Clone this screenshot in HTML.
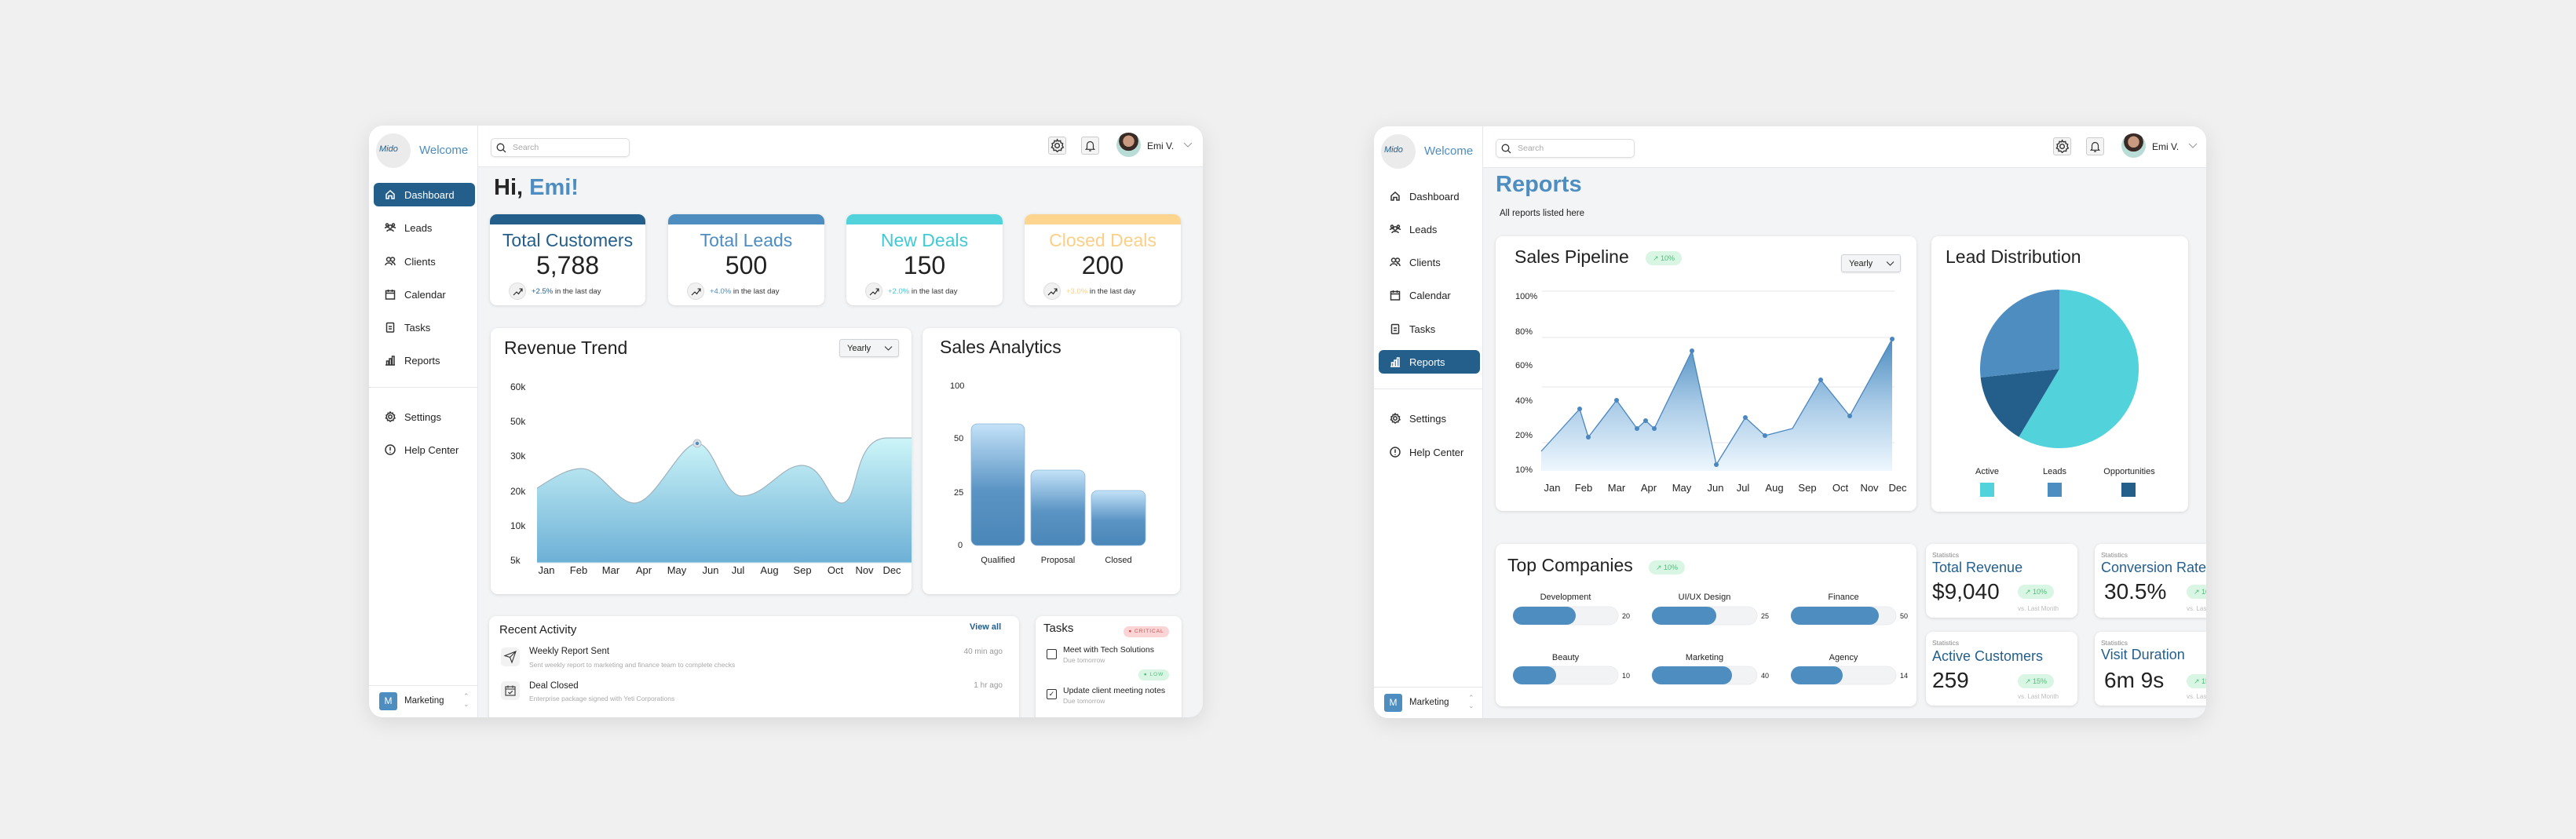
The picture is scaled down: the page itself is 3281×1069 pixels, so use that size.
<!DOCTYPE html>
<html><head><meta charset="utf-8">
<style>
*{box-sizing:border-box;margin:0;padding:0}
body{width:3281px;height:1069px;background:#f0f0f1;font-family:"Liberation Sans",sans-serif;color:#1f1f1f;position:relative;overflow:hidden}
.a{position:absolute}
.panel{position:absolute;background:#f3f4f6;border-radius:18px;overflow:hidden;box-shadow:0 6px 28px rgba(0,0,0,.10)}
.side{position:absolute;left:0;top:0;width:139px;height:100%;background:#fff;border-right:1px solid #e6e7ea}
.top{position:absolute;left:139px;top:0;right:0;height:53px;background:#fff;border-bottom:1px solid #e6e7ea}
.nav{position:absolute;left:6px;width:129px;height:30px;font-size:13px;display:flex;align-items:center;padding-left:14px;color:#222}
.nav svg{width:14px;height:14px;margin-right:11px;fill:none;stroke:#333;stroke-width:1.5}
.nav.act{background:#245f8c;color:#fff;border-radius:6px}
.nav.act svg{stroke:#fff}
.card{position:absolute;background:#fff;border-radius:9px;box-shadow:0 1px 4px rgba(0,0,0,.12)}
.stat .band{position:absolute;left:0;top:0;right:0;height:13px;border-radius:9px 9px 0 0}
.stat .t{position:absolute;left:0;right:0;top:20px;text-align:center;font-size:23px}
.stat .n{position:absolute;left:0;right:0;top:47px;text-align:center;font-size:32px;color:#222}
.stat .tr{position:absolute;left:24px;top:87px;font-size:9.5px;color:#333;display:flex;align-items:center}
.stat .tr i{display:inline-block;width:22px;height:22px;border-radius:50%;background:#f1f1f1;border:1px solid #ddd;margin-right:7px;position:relative}
.h{font-size:23px;color:#222}
.lbl{font-size:12px;color:#222}
.badge{position:absolute;background:#d9f5e3;color:#4cc27a;border-radius:10px;font-size:9px;display:flex;align-items:center;justify-content:center}
.dd{position:absolute;border:1px solid #cfd2d6;background:#f3f4f5;border-radius:3px;font-size:11px;display:flex;align-items:center;padding-left:9px;box-shadow:0 1px 2px rgba(0,0,0,.1)}
.sq{position:absolute;width:23px;height:23px;border:1px solid #ccc;border-radius:3px;background:#f4f4f4}
</style></head><body>

<!-- ================= LEFT PANEL ================= -->
<div class="panel" style="left:470px;top:160px;width:1062px;height:754px">
 <div class="side">
  <div class="a" style="left:9px;top:10px;width:44px;height:44px;border-radius:50%;background:#ebebeb"></div>
  <div class="a" style="left:13px;top:24px;font-size:11px;color:#245f8c;font-style:italic">Mido</div>
  <div class="a" style="left:64px;top:23px;font-size:15px;color:#4d8dc0">Welcome</div>
  <div class="nav act" style="top:73px"><svg viewBox="0 0 14 14"><path d="M2 6.5L7 2l5 4.5V12H9V8.5H5V12H2z"/></svg>Dashboard</div>
  <div class="nav" style="top:115px"><svg viewBox="0 0 14 14"><circle cx="7" cy="6" r="2.2"/><circle cx="3" cy="3.5" r="1.5"/><circle cx="11" cy="3.5" r="1.5"/><path d="M3 12c0-3 8-3 8 0M0.5 8c0-2 4-2 4-1M13.5 8c0-2-4-2-4-1"/></svg>Leads</div>
  <div class="nav" style="top:158px"><svg viewBox="0 0 14 14"><circle cx="5" cy="4.5" r="2.5"/><circle cx="10" cy="4.5" r="2.5"/><path d="M1 12c0-4 8-4 8 0M9 8.5c3 0 4 1.5 4 3.5"/></svg>Clients</div>
  <div class="nav" style="top:200px"><svg viewBox="0 0 14 14"><rect x="1.5" y="2.5" width="11" height="10.5"/><path d="M1.5 5.5h11M4.5 1v3M9.5 1v3"/></svg>Calendar</div>
  <div class="nav" style="top:242px"><svg viewBox="0 0 14 14"><rect x="2.5" y="1.5" width="9" height="11.5" rx="1"/><path d="M5 6h4M5 9h4"/></svg>Tasks</div>
  <div class="nav" style="top:284px"><svg viewBox="0 0 14 14"><path d="M1 13h12M2.5 13V8h2.5v5M6 13V5h2.5v8M9.5 13V2H12v11"/></svg>Reports</div>
  <div class="a" style="left:0;top:333px;width:139px;height:1px;background:#e6e7ea"></div>
  <div class="nav" style="top:356px"><svg viewBox="0 0 14 14"><circle cx="7" cy="7" r="2.2"/><path d="M7 1l1.2 1.6 2-.4.4 2L12.5 5 12 7l1 1.8-1.9.9-.2 2-2-.2L7 13l-1.4-1.5-2 .2-.2-2L1.5 8.8 2.5 7 2 5l1.9-.8.4-2 2 .4z"/></svg>Settings</div>
  <div class="nav" style="top:398px"><svg viewBox="0 0 14 14"><circle cx="7" cy="7" r="6"/><path d="M7 3.5v4.5M7 9.7v1"/></svg>Help Center</div>
  <div class="a" style="left:0;top:713px;width:139px;height:1px;background:#e6e7ea"></div>
  <div class="a" style="left:13px;top:722px;width:23px;height:23px;background:#4d8dc0;border-radius:3px;color:#fff;font-size:12px;text-align:center;line-height:23px">M</div>
  <div class="a" style="left:45px;top:727px;font-size:11.5px">Marketing</div>
  <div class="a" style="left:120px;top:722px;font-size:9px;color:#aaa;line-height:10px">⌃<br>⌄</div>
 </div>
 <div class="top">
  <div class="a" style="left:16px;top:16px;width:177px;height:24px;border:1px solid #ddd;border-radius:5px;box-shadow:0 1px 2px rgba(0,0,0,.08)">
   <svg class="a" style="left:6px;top:5px" width="13" height="13" viewBox="0 0 13 13"><circle cx="5.5" cy="5.5" r="4.3" fill="none" stroke="#333" stroke-width="1.3"/><path d="M8.7 8.7l3.3 3.3" stroke="#333" stroke-width="1.3"/></svg>
   <div class="a" style="left:27px;top:5px;font-size:10.5px;color:#aaa">Search</div>
  </div>
  <div class="sq" style="left:726px;top:14px"><svg width="21" height="21" viewBox="0 0 14 14" style="margin:0"><g transform="translate(1,1) scale(.86)" fill="none" stroke="#333" stroke-width="1.1"><circle cx="7" cy="7" r="2.2"/><path d="M7 1l1.2 1.6 2-.4.4 2L12.5 5 12 7l1 1.8-1.9.9-.2 2-2-.2L7 13l-1.4-1.5-2 .2-.2-2L1.5 8.8 2.5 7 2 5l1.9-.8.4-2 2 .4z"/></g></svg></div>
  <div class="sq" style="left:768px;top:14px"><svg width="21" height="21" viewBox="0 0 21 21"><path d="M6.5 14V9.5a4 4 0 018 0V14l1.2 1.3H5.3zM9 17h3" fill="none" stroke="#333" stroke-width="1.2"/></svg></div>
  <div class="a" style="left:813px;top:9px;width:31px;height:31px;border-radius:50%;background:radial-gradient(circle at 50% 35%,#c99a80 0 28%,#3a2a25 29% 48%,#b9ddd6 49%)"></div>
  <div class="a" style="left:852px;top:19px;font-size:12px">Emi V.</div>
  <svg class="a" style="left:898px;top:21px" width="12" height="8" viewBox="0 0 12 8"><path d="M1 1l5 5 5-5" fill="none" stroke="#999" stroke-width="1.1"/></svg>
 </div>
 <div class="a" style="left:159px;top:63px;font-size:29px;font-weight:bold;color:#262626">Hi, <span style="color:#4d8dc0">Emi!</span></div>

 <div class="card stat" style="left:154px;top:113px;width:198px;height:116px"><div class="band" style="background:#245f8c"></div><div class="t" style="color:#245f8c">Total Customers</div><div class="n">5,788</div><div class="tr"><i><svg class="a" style="left:4px;top:5px" width="13" height="11" viewBox="0 0 13 11"><path d="M1 10l4-4 2.5 2.5L12 2M8.5 2H12v3.5" fill="none" stroke="#222" stroke-width="1.1"/></svg></i><b style="color:#245f8c;font-weight:normal">+2.5%</b>&nbsp;in the last day</div></div>
 <div class="card stat" style="left:381px;top:113px;width:199px;height:116px"><div class="band" style="background:#4d8dc0"></div><div class="t" style="color:#4d8dc0">Total Leads</div><div class="n">500</div><div class="tr"><i><svg class="a" style="left:4px;top:5px" width="13" height="11" viewBox="0 0 13 11"><path d="M1 10l4-4 2.5 2.5L12 2M8.5 2H12v3.5" fill="none" stroke="#222" stroke-width="1.1"/></svg></i><b style="color:#4d8dc0;font-weight:normal">+4.0%</b>&nbsp;in the last day</div></div>
 <div class="card stat" style="left:608px;top:113px;width:199px;height:116px"><div class="band" style="background:#52d2db"></div><div class="t" style="color:#3fcad4">New Deals</div><div class="n">150</div><div class="tr"><i><svg class="a" style="left:4px;top:5px" width="13" height="11" viewBox="0 0 13 11"><path d="M1 10l4-4 2.5 2.5L12 2M8.5 2H12v3.5" fill="none" stroke="#222" stroke-width="1.1"/></svg></i><b style="color:#3fcad4;font-weight:normal">+2.0%</b>&nbsp;in the last day</div></div>
 <div class="card stat" style="left:835px;top:113px;width:199px;height:116px"><div class="band" style="background:#fdd58f"></div><div class="t" style="color:#fbcf86">Closed Deals</div><div class="n">200</div><div class="tr"><i><svg class="a" style="left:4px;top:5px" width="13" height="11" viewBox="0 0 13 11"><path d="M1 10l4-4 2.5 2.5L12 2M8.5 2H12v3.5" fill="none" stroke="#222" stroke-width="1.1"/></svg></i><b style="color:#fbcf86;font-weight:normal">+3.0%</b>&nbsp;in the last day</div></div>

 <div class="card" style="left:155px;top:258px;width:536px;height:339px"></div>
 <div class="a h" style="left:172px;top:270px">Revenue Trend</div>
 <div class="dd" style="left:599px;top:272px;width:76px;height:23px">Yearly<svg class="a" style="left:56px;top:7px" width="11" height="8" viewBox="0 0 11 8"><path d="M1 1.5l4.5 4.5 4.5-4.5" fill="none" stroke="#333" stroke-width="1.1"/></svg></div>
 <div class="a lbl" style="left:180px;top:326px;line-height:14px">60k</div>
 <div class="a lbl" style="left:180px;top:370px">50k</div>
 <div class="a lbl" style="left:180px;top:414px">30k</div>
 <div class="a lbl" style="left:180px;top:459px">20k</div>
 <div class="a lbl" style="left:180px;top:503px">10k</div>
 <div class="a lbl" style="left:180px;top:547px">5k</div>

 <div class="card" style="left:705px;top:258px;width:328px;height:339px"></div>
 <div class="a h" style="left:727px;top:269px">Sales Analytics</div>
 <div class="a" style="left:740px;top:326px;font-size:11px">100</div>
 <div class="a" style="left:745px;top:393px;font-size:11px">50</div>
 <div class="a" style="left:745px;top:462px;font-size:11px">25</div>
 <div class="a" style="left:750px;top:529px;font-size:11px">0</div>
 <div class="a" style="left:767px;top:548px;width:68px;text-align:center;font-size:11px">Qualified</div>
 <div class="a" style="left:843px;top:548px;width:69px;text-align:center;font-size:11px">Proposal</div>
 <div class="a" style="left:920px;top:548px;width:69px;text-align:center;font-size:11px">Closed</div>

 <svg class="a" style="left:0;top:0" width="1062" height="754" viewBox="0 0 1062 754">
  <defs>
   <linearGradient id="rg" x1="0" y1="0" x2="0" y2="1"><stop offset="0" stop-color="#ccf5f8"/><stop offset="1" stop-color="#6db0d6"/></linearGradient>
   <linearGradient id="bg" x1="0" y1="0" x2="0" y2="1"><stop offset="0" stop-color="#c3e2f8"/><stop offset=".55" stop-color="#5a94c4"/><stop offset="1" stop-color="#4a86b8"/></linearGradient>
  </defs>
  <path d="M214,462 C240,445 255,437 271,437 C295,437 315,481 338,481 C365,481 395,405 418,405 C440,405 450,472 475,472 C505,472 525,433 551,433 C580,433 585,481 602,481 C625,481 615,398 660,398 L691,398 L691,557 L214,557 Z" fill="url(#rg)"/>
  <path d="M214,462 C240,445 255,437 271,437 C295,437 315,481 338,481 C365,481 395,405 418,405 C440,405 450,472 475,472 C505,472 525,433 551,433 C580,433 585,481 602,481 C625,481 615,398 660,398 L691,398" fill="none" stroke="#9fb3bf" stroke-width="1.2"/>
  <line x1="214" y1="557" x2="691" y2="557" stroke="#cfe3ea" stroke-width="1"/>
  <circle cx="418" cy="405" r="5" fill="#dde3e8" stroke="#b7c2ca"/><circle cx="418" cy="405" r="2.2" fill="#4d8dc0"/>
  <g font-family="Liberation Sans" font-size="13" fill="#222" text-anchor="middle">
   <text x="226" y="571">Jan</text><text x="267" y="571">Feb</text><text x="308" y="571">Mar</text><text x="350" y="571">Apr</text><text x="392" y="571">May</text><text x="435" y="571">Jun</text><text x="470" y="571">Jul</text><text x="510" y="571">Aug</text><text x="552" y="571">Sep</text><text x="594" y="571">Oct</text><text x="631" y="571">Nov</text><text x="666" y="571">Dec</text>
  </g>
  <rect x="767" y="380" width="68" height="155" rx="8" fill="url(#bg)" stroke="#8fb6d6" stroke-width=".8"/>
  <rect x="843" y="439" width="69" height="96" rx="8" fill="url(#bg)" stroke="#8fb6d6" stroke-width=".8"/>
  <rect x="920" y="465" width="69" height="70" rx="8" fill="url(#bg)" stroke="#8fb6d6" stroke-width=".8"/>
 </svg>

 <div class="card" style="left:153px;top:625px;width:675px;height:160px"></div>
 <div class="a" style="left:166px;top:634px;font-size:15px">Recent Activity</div>
 <div class="a" style="left:765px;top:633px;font-size:11px;color:#245f8c;font-weight:bold">View all</div>
 <div class="a" style="left:168px;top:665px;width:24px;height:24px;background:#f2f2f2;border-radius:5px"><svg width="24" height="24" viewBox="0 0 24 24"><path d="M5 10.5L19 5l-5 14-2.5-6.5zM11.5 12.5L19 5" fill="none" stroke="#333" stroke-width="1.1"/></svg></div>
 <div class="a" style="left:204px;top:664px;font-size:11.5px">Weekly Report Sent</div>
 <div class="a" style="left:204px;top:682px;font-size:8.5px;color:#aaa">Sent weekly report to marketing and finance team to complete checks</div>
 <div class="a" style="left:740px;top:665px;width:67px;text-align:right;font-size:10px;color:#999">40 min ago</div>
 <div class="a" style="left:168px;top:708px;width:24px;height:24px;background:#f2f2f2;border-radius:5px"><svg width="24" height="24" viewBox="0 0 24 24"><rect x="6" y="7" width="12" height="11" fill="none" stroke="#333" stroke-width="1.1"/><path d="M6 10h12M9 5.5v3M15 5.5v3M9.5 14l1.8 1.8 3.5-3.5" fill="none" stroke="#333" stroke-width="1.1"/></svg></div>
 <div class="a" style="left:204px;top:708px;font-size:11.5px">Deal Closed</div>
 <div class="a" style="left:204px;top:725px;font-size:8.5px;color:#aaa">Enterprise package signed with Yeti Corporations</div>
 <div class="a" style="left:740px;top:708px;width:67px;text-align:right;font-size:10px;color:#999">1 hr ago</div>

 <div class="card" style="left:849px;top:625px;width:186px;height:160px"></div>
 <div class="a" style="left:859px;top:632px;font-size:15px">Tasks</div>
 <div class="a" style="left:961px;top:638px;width:58px;height:14px;background:#fbd5d5;border-radius:7px;font-size:6.5px;color:#d34848;letter-spacing:1px;text-align:center;line-height:14px">● CRITICAL</div>
 <div class="a" style="left:863px;top:667px;width:13px;height:13px;border:1.3px solid #333;border-radius:2px"></div>
 <div class="a" style="left:884px;top:662px;font-size:10.5px">Meet with Tech Solutions</div>
 <div class="a" style="left:884px;top:676px;font-size:8.5px;color:#aaa">Due tomorrow</div>
 <div class="a" style="left:980px;top:693px;width:39px;height:14px;background:#d9f5e3;border-radius:7px;font-size:6.5px;color:#4cc27a;letter-spacing:1px;text-align:center;line-height:14px">● LOW</div>
 <div class="a" style="left:863px;top:718px;width:13px;height:13px;border:1.3px solid #333;border-radius:2px;font-size:9px;line-height:11px;text-align:center">✓</div>
 <div class="a" style="left:884px;top:714px;font-size:10.5px">Update client meeting notes</div>
 <div class="a" style="left:884px;top:728px;font-size:8.5px;color:#aaa">Due tomorrow</div>
</div>

<!-- ================= RIGHT PANEL ================= -->
<div class="panel" style="left:1750px;top:161px;width:1060px;height:754px">
 <div class="side">
  <div class="a" style="left:9px;top:10px;width:44px;height:44px;border-radius:50%;background:#ebebeb"></div>
  <div class="a" style="left:13px;top:24px;font-size:11px;color:#245f8c;font-style:italic">Mido</div>
  <div class="a" style="left:64px;top:23px;font-size:15px;color:#4d8dc0">Welcome</div>
  <div class="nav" style="top:74px"><svg viewBox="0 0 14 14"><path d="M2 6.5L7 2l5 4.5V12H9V8.5H5V12H2z"/></svg>Dashboard</div>
  <div class="nav" style="top:116px"><svg viewBox="0 0 14 14"><circle cx="7" cy="6" r="2.2"/><circle cx="3" cy="3.5" r="1.5"/><circle cx="11" cy="3.5" r="1.5"/><path d="M3 12c0-3 8-3 8 0M0.5 8c0-2 4-2 4-1M13.5 8c0-2-4-2-4-1"/></svg>Leads</div>
  <div class="nav" style="top:158px"><svg viewBox="0 0 14 14"><circle cx="5" cy="4.5" r="2.5"/><circle cx="10" cy="4.5" r="2.5"/><path d="M1 12c0-4 8-4 8 0M9 8.5c3 0 4 1.5 4 3.5"/></svg>Clients</div>
  <div class="nav" style="top:200px"><svg viewBox="0 0 14 14"><rect x="1.5" y="2.5" width="11" height="10.5"/><path d="M1.5 5.5h11M4.5 1v3M9.5 1v3"/></svg>Calendar</div>
  <div class="nav" style="top:243px"><svg viewBox="0 0 14 14"><rect x="2.5" y="1.5" width="9" height="11.5" rx="1"/><path d="M5 6h4M5 9h4"/></svg>Tasks</div>
  <div class="nav act" style="top:285px"><svg viewBox="0 0 14 14"><path d="M1 13h12M2.5 13V8h2.5v5M6 13V5h2.5v8M9.5 13V2H12v11"/></svg>Reports</div>
  <div class="a" style="left:0;top:334px;width:139px;height:1px;background:#e6e7ea"></div>
  <div class="nav" style="top:357px"><svg viewBox="0 0 14 14"><circle cx="7" cy="7" r="2.2"/><path d="M7 1l1.2 1.6 2-.4.4 2L12.5 5 12 7l1 1.8-1.9.9-.2 2-2-.2L7 13l-1.4-1.5-2 .2-.2-2L1.5 8.8 2.5 7 2 5l1.9-.8.4-2 2 .4z"/></svg>Settings</div>
  <div class="nav" style="top:400px"><svg viewBox="0 0 14 14"><circle cx="7" cy="7" r="6"/><path d="M7 3.5v4.5M7 9.7v1"/></svg>Help Center</div>
  <div class="a" style="left:0;top:714px;width:139px;height:1px;background:#e6e7ea"></div>
  <div class="a" style="left:13px;top:723px;width:23px;height:23px;background:#4d8dc0;border-radius:3px;color:#fff;font-size:12px;text-align:center;line-height:23px">M</div>
  <div class="a" style="left:45px;top:728px;font-size:11.5px">Marketing</div>
  <div class="a" style="left:120px;top:723px;font-size:9px;color:#aaa;line-height:10px">⌃<br>⌄</div>
 </div>
 <div class="top">
  <div class="a" style="left:16px;top:16px;width:177px;height:24px;border:1px solid #ddd;border-radius:5px;box-shadow:0 1px 2px rgba(0,0,0,.08)">
   <svg class="a" style="left:6px;top:5px" width="13" height="13" viewBox="0 0 13 13"><circle cx="5.5" cy="5.5" r="4.3" fill="none" stroke="#333" stroke-width="1.3"/><path d="M8.7 8.7l3.3 3.3" stroke="#333" stroke-width="1.3"/></svg>
   <div class="a" style="left:27px;top:5px;font-size:10.5px;color:#aaa">Search</div>
  </div>
  <div class="sq" style="left:726px;top:14px"><svg width="21" height="21" viewBox="0 0 14 14"><g transform="translate(1,1) scale(.86)" fill="none" stroke="#333" stroke-width="1.1"><circle cx="7" cy="7" r="2.2"/><path d="M7 1l1.2 1.6 2-.4.4 2L12.5 5 12 7l1 1.8-1.9.9-.2 2-2-.2L7 13l-1.4-1.5-2 .2-.2-2L1.5 8.8 2.5 7 2 5l1.9-.8.4-2 2 .4z"/></g></svg></div>
  <div class="sq" style="left:768px;top:14px"><svg width="21" height="21" viewBox="0 0 21 21"><path d="M6.5 14V9.5a4 4 0 018 0V14l1.2 1.3H5.3zM9 17h3" fill="none" stroke="#333" stroke-width="1.2"/></svg></div>
  <div class="a" style="left:813px;top:9px;width:31px;height:31px;border-radius:50%;background:radial-gradient(circle at 50% 35%,#c99a80 0 28%,#3a2a25 29% 48%,#b9ddd6 49%)"></div>
  <div class="a" style="left:852px;top:19px;font-size:12px">Emi V.</div>
  <svg class="a" style="left:898px;top:21px" width="12" height="8" viewBox="0 0 12 8"><path d="M1 1l5 5 5-5" fill="none" stroke="#999" stroke-width="1.1"/></svg>
 </div>
 <div class="a" style="left:155px;top:58px;font-size:29px;font-weight:bold;color:#4d8dc0">Reports</div>
 <div class="a" style="left:160px;top:105px;font-size:11.5px">All reports listed here</div>

 <div class="card" style="left:155px;top:140px;width:536px;height:350px"></div>
 <div class="a h" style="left:179px;top:153px">Sales Pipeline</div>
 <div class="badge" style="left:346px;top:159px;width:46px;height:18px">↗ 10%</div>
 <div class="dd" style="left:595px;top:163px;width:76px;height:23px">Yearly<svg class="a" style="left:56px;top:7px" width="11" height="8" viewBox="0 0 11 8"><path d="M1 1.5l4.5 4.5 4.5-4.5" fill="none" stroke="#333" stroke-width="1.1"/></svg></div>
 <div class="a" style="left:180px;top:211px;font-size:11px">100%</div>
 <div class="a" style="left:180px;top:256px;font-size:11px">80%</div>
 <div class="a" style="left:180px;top:299px;font-size:11px">60%</div>
 <div class="a" style="left:180px;top:344px;font-size:11px">40%</div>
 <div class="a" style="left:180px;top:388px;font-size:11px">20%</div>
 <div class="a" style="left:180px;top:432px;font-size:11px">10%</div>

 <div class="card" style="left:710px;top:140px;width:327px;height:351px"></div>
 <div class="a h" style="left:728px;top:153px">Lead Distribution</div>
 <div class="a" style="left:748px;top:434px;width:66px;text-align:center;font-size:11px">Active</div>
 <div class="a" style="left:834px;top:434px;width:66px;text-align:center;font-size:11px">Leads</div>
 <div class="a" style="left:920px;top:434px;width:84px;text-align:center;font-size:11px">Opportunities</div>
 <div class="a" style="left:772px;top:454px;width:18px;height:18px;background:#52d2db"></div>
 <div class="a" style="left:858px;top:454px;width:18px;height:18px;background:#4d8dc0"></div>
 <div class="a" style="left:952px;top:454px;width:18px;height:18px;background:#245f8c"></div>

 <div class="card" style="left:155px;top:532px;width:536px;height:207px"></div>
 <div class="a h" style="left:170px;top:546px">Top Companies</div>
 <div class="badge" style="left:350px;top:553px;width:46px;height:18px">↗ 10%</div>

 <svg class="a" style="left:0;top:0" width="1060" height="754" viewBox="0 0 1060 754">
  <defs>
   <linearGradient id="pg" x1="0" y1="0" x2="0" y2="1"><stop offset="0" stop-color="#4d8dc0"/><stop offset=".5" stop-color="#a9cbe7"/><stop offset="1" stop-color="#eef7fe"/></linearGradient>
  </defs>
  <g stroke="#e4e6e9" stroke-width="1"><line x1="214" y1="210" x2="663" y2="210"/><line x1="214" y1="269" x2="663" y2="269"/><line x1="214" y1="332" x2="663" y2="332"/><line x1="214" y1="403" x2="663" y2="403"/></g>
  <path d="M213,414 L262,360 L273,396 L309,349 L335,385 L346,375 L357,385 L405,286 L436,431 L473,371 L498,394 L533,385 L569,323 L606,369 L660,271 L660,439 L213,439 Z" fill="url(#pg)"/>
  <polyline points="213,414 262,360 273,396 309,349 335,385 346,375 357,385 405,286 436,431 473,371 498,394 533,385 569,323 606,369 660,271" fill="none" stroke="#4a86c0" stroke-width="1.3"/>
  <g fill="#4a86c0"><circle cx="262" cy="360" r="3"/><circle cx="273" cy="396" r="3"/><circle cx="309" cy="349" r="3"/><circle cx="335" cy="385" r="3"/><circle cx="346" cy="375" r="3"/><circle cx="357" cy="385" r="3"/><circle cx="405" cy="286" r="3"/><circle cx="436" cy="431" r="3"/><circle cx="473" cy="371" r="3"/><circle cx="498" cy="394" r="3"/><circle cx="569" cy="323" r="3"/><circle cx="606" cy="369" r="3"/><circle cx="660" cy="271" r="3"/></g>
  <g font-family="Liberation Sans" font-size="13" fill="#222" text-anchor="middle">
   <text x="227" y="465">Jan</text><text x="267" y="465">Feb</text><text x="309" y="465">Mar</text><text x="350" y="465">Apr</text><text x="392" y="465">May</text><text x="435" y="465">Jun</text><text x="470" y="465">Jul</text><text x="510" y="465">Aug</text><text x="552" y="465">Sep</text><text x="594" y="465">Oct</text><text x="631" y="465">Nov</text><text x="667" y="465">Dec</text>
  </g>
  <path d="M873,309 L873,208 A101,101 0 1 1 821.4,395.8 Z" fill="#52d2db"/>
  <path d="M873,309 L821.4,395.8 A101,101 0 0 1 772.6,319.9 Z" fill="#245f8c"/>
  <path d="M873,309 L772.6,319.9 A101,101 0 0 1 873,208 Z" fill="#4d8dc0"/>
  <g font-family="Liberation Sans" font-size="11" fill="#222" text-anchor="middle">
   <text x="244" y="603">Development</text><text x="421" y="603">UI/UX Design</text><text x="598" y="603">Finance</text>
   <text x="244" y="680">Beauty</text><text x="421" y="680">Marketing</text><text x="598" y="680">Agency</text>
  </g>
  <g fill="#f2f3f5" stroke="#e8e9eb" stroke-width=".8">
   <rect x="177" y="612" width="134" height="23" rx="11.5"/><rect x="354" y="612" width="134" height="23" rx="11.5"/><rect x="531" y="612" width="134" height="23" rx="11.5"/>
   <rect x="177" y="688" width="134" height="23" rx="11.5"/><rect x="354" y="688" width="134" height="23" rx="11.5"/><rect x="531" y="688" width="134" height="23" rx="11.5"/>
  </g>
  <g fill="#4d8dc0">
   <rect x="177" y="612" width="80" height="23" rx="11.5"/><rect x="354" y="612" width="82" height="23" rx="11.5"/><rect x="531" y="612" width="112" height="23" rx="11.5"/>
   <rect x="177" y="688" width="55" height="23" rx="11.5"/><rect x="354" y="688" width="102" height="23" rx="11.5"/><rect x="531" y="688" width="66" height="23" rx="11.5"/>
  </g>
  <g font-family="Liberation Sans" font-size="9" fill="#222">
   <text x="316" y="627">20</text><text x="493" y="627">25</text><text x="670" y="627">50</text>
   <text x="316" y="703">10</text><text x="493" y="703">40</text><text x="670" y="703">14</text>
  </g>
 </svg>

 <div class="card" style="left:703px;top:532px;width:193px;height:94px"></div>
 <div class="a" style="left:711px;top:541px;font-size:8.5px;color:#888">Statistics</div>
 <div class="a" style="left:711px;top:552px;font-size:18px;color:#245f8c">Total Revenue</div>
 <div class="a" style="left:711px;top:577px;font-size:28px;color:#222">$9,040</div>
 <div class="badge" style="left:820px;top:584px;width:46px;height:18px">↗ 10%</div>
 <div class="a" style="left:820px;top:610px;font-size:8px;color:#bbb">vs. Last Month</div>

 <div class="card" style="left:918px;top:532px;width:193px;height:94px"></div>
 <div class="a" style="left:926px;top:541px;font-size:8.5px;color:#888">Statistics</div>
 <div class="a" style="left:926px;top:552px;font-size:18px;color:#245f8c;white-space:nowrap">Conversion Rate</div>
 <div class="a" style="left:930px;top:577px;font-size:28px;color:#222">30.5%</div>
 <div class="badge" style="left:1035px;top:584px;width:46px;height:18px">↗ 10%</div>
 <div class="a" style="left:1035px;top:610px;font-size:8px;color:#bbb;white-space:nowrap">vs. Last Month</div>

 <div class="card" style="left:703px;top:644px;width:193px;height:94px"></div>
 <div class="a" style="left:711px;top:653px;font-size:8.5px;color:#888">Statistics</div>
 <div class="a" style="left:711px;top:665px;font-size:18px;color:#245f8c">Active Customers</div>
 <div class="a" style="left:711px;top:690px;font-size:28px;color:#222">259</div>
 <div class="badge" style="left:820px;top:698px;width:46px;height:18px">↗ 15%</div>
 <div class="a" style="left:820px;top:722px;font-size:8px;color:#bbb">vs. Last Month</div>

 <div class="card" style="left:918px;top:644px;width:193px;height:94px"></div>
 <div class="a" style="left:926px;top:653px;font-size:8.5px;color:#888">Statistics</div>
 <div class="a" style="left:926px;top:663px;font-size:18px;color:#245f8c">Visit Duration</div>
 <div class="a" style="left:930px;top:690px;font-size:28px;color:#222">6m 9s</div>
 <div class="badge" style="left:1035px;top:698px;width:46px;height:18px">↗ 15%</div>
 <div class="a" style="left:1035px;top:722px;font-size:8px;color:#bbb;white-space:nowrap">vs. Last Month</div>
</div>
</body></html>
